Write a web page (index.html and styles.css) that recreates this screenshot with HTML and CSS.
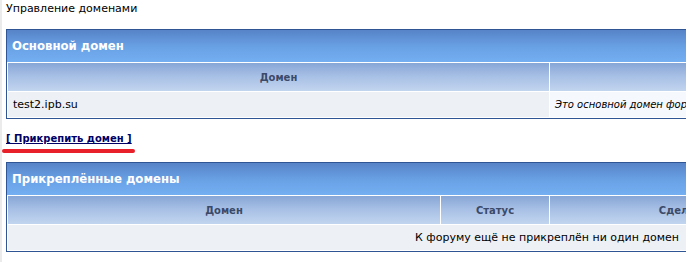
FILE: index.html
```html
<!DOCTYPE html>
<html>
<head>
<meta charset="utf-8">
<link rel="stylesheet" href="styles.css">
</head>
<body>
<div class="page">
  <div class="pagetitle">Управление доменами</div>

  <div class="box box-main">
    <div class="boxtitle">Основной домен</div>
    <table class="grid">
      <tr>
        <th class="c-main">Домен</th>
        <th class="c-note"></th>
      </tr>
      <tr>
        <td class="row1">test2.ipb.su</td>
        <td class="row2"><i>Это основной домен форума, его нельзя удалить</i></td>
      </tr>
    </table>
  </div>

  <div class="actions">
    <a class="addlink" href="#">[ Прикрепить домен ]</a>
    <span class="mark"></span>
  </div>

  <div class="box">
    <div class="boxtitle">Прикреплённые домены</div>
    <table class="grid">
      <tr>
        <th class="c-dom">Домен</th>
        <th class="c-stat">Статус</th>
        <th class="c-act">Сделать</th>
        <th class="c-rest"></th>
      </tr>
      <tr>
        <td class="row1 empty" colspan="4">К форуму ещё не прикреплён ни один домен</td>
      </tr>
    </table>
  </div>
</div>
</body>
</html>
```

FILE: styles.css
```css
html, body {
  margin: 0;
  padding: 0;
  background: #ffffff;
  overflow: hidden;
}
body {
  font-family: "DejaVu Sans", Verdana, sans-serif;
  font-size: 11px;
  color: #000000;
  width: 686px;
  height: 262px;
}
.page {
  border-left: 2px solid #ebebeb;
  padding: 2px 0 0 4px;
  height: 260px;
  width: 1200px;
}
.pagetitle {
  height: 14px;
  line-height: 14px;
  margin-bottom: 13px;
}
.box {
  width: 1080px;
  border: 1px solid #2f5594;
  background: #ffffff;
}
.boxtitle {
  height: 32px;
  line-height: 32px;
  padding-left: 5px;
  font-family: "DejaVu Sans Condensed", "DejaVu Sans", sans-serif;
  font-size: 13px;
  font-weight: bold;
  color: #ffffff;
  background: linear-gradient(to bottom, #5783c8 0%, #6aa2e6 55%, #74aff2 100%);
}
.grid {
  width: 100%;
  border-collapse: separate;
  border-spacing: 1px;
  table-layout: fixed;
}
.grid th {
  height: 28px;
  padding: 0;
  font-size: 10px;
  font-weight: bold;
  color: #3b4a68;
  text-align: center;
  background: linear-gradient(to bottom, #87a6d6 0%, #a9c1e6 50%, #c2d5ef 100%);
}
.grid td {
  height: 25px;
  padding: 0 5px;
}
.row1 {
  background: #edf0f5;
}
.row2 {
  background: #f5f8fc;
  font-size: 10px;
}
.c-main { width: 541px; }
.c-dom { width: 432px; }
.c-stat { width: 108px; }
.c-act { width: 266px; }
.empty {
  text-align: center;
}
.actions {
  position: relative;
  height: 43px;
  padding-top: 13px;
  box-sizing: border-box;
}
.addlink {
  font-weight: bold;
  color: #000066;
  text-decoration: underline;
  font-size: 10px;
  line-height: 14px;
}
.mark {
  position: absolute;
  left: -4px;
  top: 30px;
  width: 133px;
  height: 4px;
  border-radius: 2px;
  background: #e8202a;
}
```
